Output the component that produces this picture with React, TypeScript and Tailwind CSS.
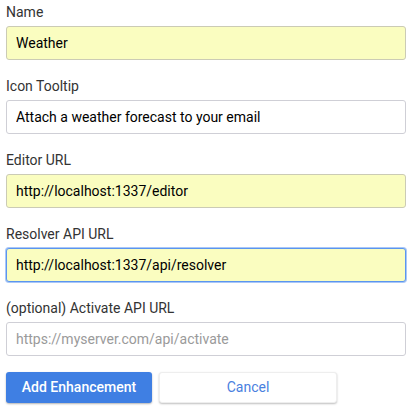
import React from 'react'

type Field = {
  label: string
  value?: string
  placeholder?: string
  filled?: boolean
  focused?: boolean
}

const FIELDS: Field[] = [
  { label: 'Name', value: 'Weather', filled: true },
  { label: 'Icon Tooltip', value: 'Attach a weather forecast to your email' },
  { label: 'Editor URL', value: 'http://localhost:1337/editor', filled: true },
  { label: 'Resolver API URL', value: 'http://localhost:1337/api/resolver', filled: true, focused: true },
  { label: '(optional) Activate API URL', placeholder: 'https://myserver.com/api/activate' },
]

const FormField = ({ label, value, placeholder, filled, focused }: Field) => {
  const base =
    'block w-full h-[34px] rounded-[3px] px-[9px] text-[14px] text-black outline-none placeholder:text-[#9a9a9a]'
  const tone = filled ? 'bg-[#fafdc0]' : 'bg-white'
  const border = focused
    ? 'border border-[#5b95f0] shadow-[0_0_0_1px_#a9c7f7]'
    : filled
      ? 'border border-[#cbcbb5]'
      : 'border border-[#cfcfd6]'

  return (
    <div className="mb-[14px]">
      <label className="block text-[14px] leading-[24px] text-[#333] mb-[2px]">{label}</label>
      <input
        readOnly
        defaultValue={value}
        placeholder={placeholder}
        className={`${base} ${tone} ${border}`}
      />
    </div>
  )
}

export default function App() {
  return (
    <div className="w-[415px] h-[418px] bg-white px-[6px] pr-[9px]" style={{ fontFamily: 'Roboto, Arial, sans-serif' }}>
      {FIELDS.map(f => (
        <FormField key={f.label} {...f} />
      ))}

      {/* Actions */}
      <div className="flex gap-[7px] mt-[16px]">
        <button className="w-[146px] h-[31px] rounded-[3px] bg-[#3f7fe3] text-white text-[14px] font-medium shadow-[0_1px_2px_rgba(0,0,0,0.3)]">
          Add Enhancement
        </button>
        <button className="w-[178px] h-[31px] rounded-[3px] bg-white text-[#4a7fe0] text-[14px] shadow-[0_1px_2px_rgba(0,0,0,0.25)] border border-[#eee]">
          Cancel
        </button>
      </div>
    </div>
  )
}
